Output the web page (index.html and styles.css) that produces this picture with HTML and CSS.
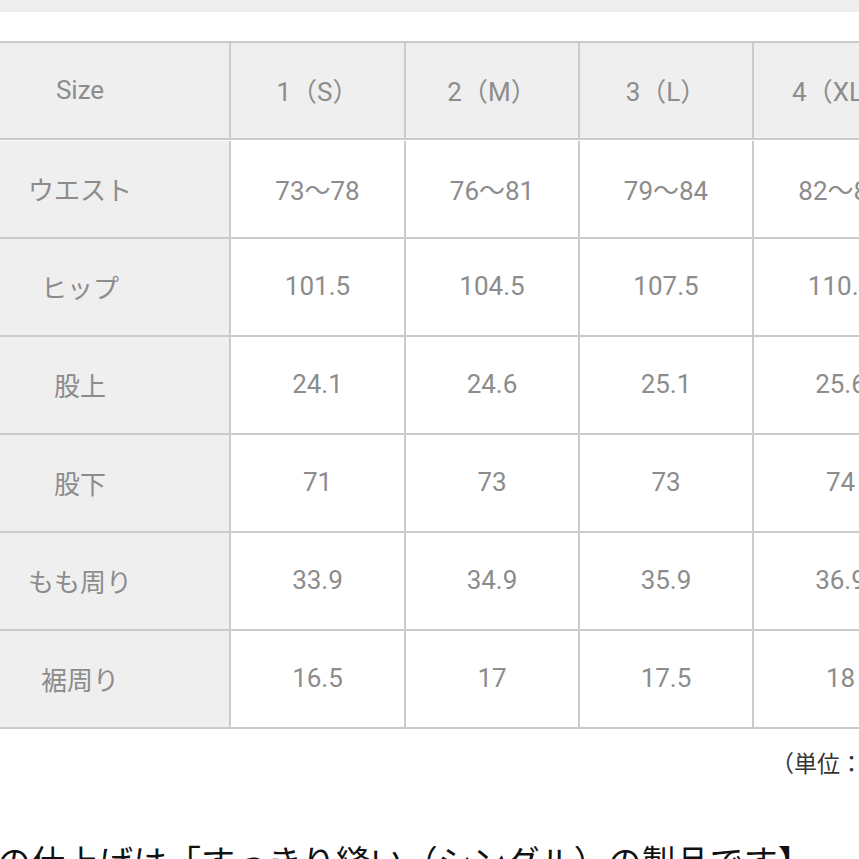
FILE: index.html
```html
<!DOCTYPE html>
<html lang="ja">
<head>
<meta charset="utf-8">
<link rel="stylesheet" href="styles.css">
</head>
<body>
<div class="topbar"></div>
<div class="sheet">
  <div class="size-table">
    <div class="cell head label">Size</div>
    <div class="cell head">1（S）</div>
    <div class="cell head">2（M）</div>
    <div class="cell head">3（L）</div>
    <div class="cell head">4（XL）</div>

    <div class="cell label">ウエスト</div>
    <div class="cell">73〜78</div>
    <div class="cell">76〜81</div>
    <div class="cell">79〜84</div>
    <div class="cell">82〜87</div>

    <div class="cell label">ヒップ</div>
    <div class="cell">101.5</div>
    <div class="cell">104.5</div>
    <div class="cell">107.5</div>
    <div class="cell">110.5</div>

    <div class="cell label">股上</div>
    <div class="cell">24.1</div>
    <div class="cell">24.6</div>
    <div class="cell">25.1</div>
    <div class="cell">25.6</div>

    <div class="cell label">股下</div>
    <div class="cell">71</div>
    <div class="cell">73</div>
    <div class="cell">73</div>
    <div class="cell">74</div>

    <div class="cell label">もも周り</div>
    <div class="cell">33.9</div>
    <div class="cell">34.9</div>
    <div class="cell">35.9</div>
    <div class="cell">36.9</div>

    <div class="cell label">裾周り</div>
    <div class="cell">16.5</div>
    <div class="cell">17</div>
    <div class="cell">17.5</div>
    <div class="cell">18</div>
  </div>
  <div class="unit">（単位：cm）</div>
  <p class="note">の仕上げは「すっきり縫い（シングル）の製品です】</p>
</div>
</body>
</html>
```
FILE: styles.css
```css
html, body {
  margin: 0;
  padding: 0;
  background: #ffffff;
  overflow: hidden;
  height: 859px;
}

body {
  font-family: Roboto, "Noto Sans CJK JP", sans-serif;
}

.topbar {
  height: 12px;
  background: #eeeeee;
}

.sheet {
  margin-top: 29px;
  margin-left: -69px;
  width: 998px;
}

.size-table {
  display: grid;
  grid-template-columns: 300px 175px 174px 174px 175px;
  grid-auto-rows: 98px;
  border-top: 2px solid #cbcbcb;
}

.size-table .cell:nth-child(-n+5) {
  height: 97px;
}

.cell {
  box-sizing: border-box;
  display: flex;
  align-items: center;
  justify-content: center;
  border-right: 2px solid #cbcbcb;
  border-bottom: 2px solid #cbcbcb;
  background: #ffffff;
  color: #8c8c8c;
  font-size: 26px;
  white-space: nowrap;
  padding-bottom: 2px;
}

.head,
.label {
  background: #efefef;
}

.unit {
  margin-top: 18px;
  padding-right: 10px;
  text-align: right;
  font-size: 23px;
  line-height: 30px;
  color: #333333;
  font-family: "Noto Sans CJK JP", sans-serif;
}

.note {
  margin: 61px 0 0 66px;
  font-size: 34px;
  line-height: 46px;
  color: #111111;
  white-space: nowrap;
  font-family: "Noto Sans CJK JP", sans-serif;
}
```
